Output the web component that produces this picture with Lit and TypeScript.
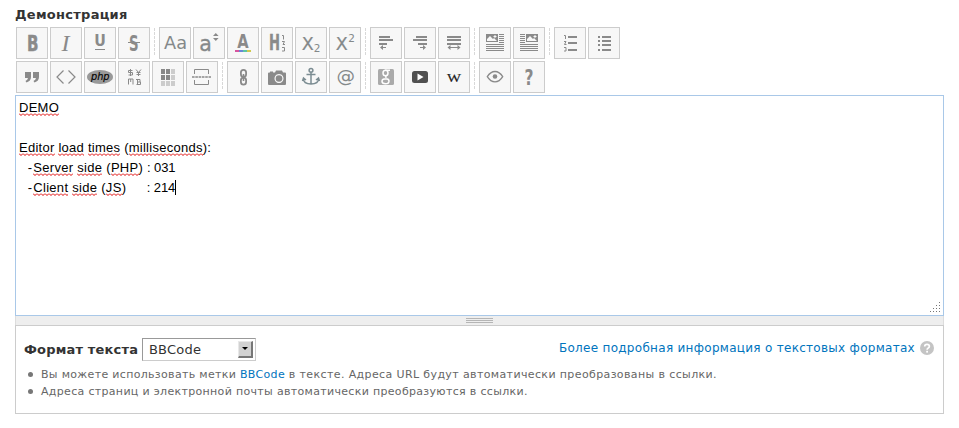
import { LitElement, html, css, svg } from "lit";
import { customElement, property } from "lit/decorators.js";

const hline = (x: number, y: number, w: number, h = 2) =>
  svg`<rect x=${x} y=${y} width=${w} height=${h} shape-rendering="crispEdges"/>`;

const picture = (x: number) => svg`
  <path fill-rule="evenodd" d="M${x} 7h12v8h-12z M${x + 1} 14v-2l3-3 3 3 1-1 3 3z M${x + 8.5} 8h1v1h1v1h-1v1h-1v-1h-1v-1h1z"/>`;

const fullLines = [17, 19, 21, 23].map((y) => hline(7, y, 18, 1));

const icons: Record<string, unknown> = {
  bold: svg`<text class="heavy" x="11" y="24" font-size="22" textLength="11.5" lengthAdjust="spacingAndGlyphs" stroke="#8a8a8a" stroke-width=".5">B</text>`,
  italic: svg`<text class="serif" x="11.6" y="24" font-size="24" font-style="italic">I</text>`,
  underline: svg`<text class="heavy" x="10.2" y="19.4" font-size="16" textLength="11.6" lengthAdjust="spacingAndGlyphs">U</text>${hline(11, 22, 10, 1)}`,
  strike: svg`<text class="heavy" x="11" y="23.5" font-size="20.5" textLength="9.6" lengthAdjust="spacingAndGlyphs">S</text>${hline(10, 15, 12, 1)}`,
  font: svg`<text class="sans" x="5" y="22" font-size="17.5" textLength="23" lengthAdjust="spacingAndGlyphs">Aa</text>`,
  size: svg`<text class="sans" x="6.3" y="24" font-size="21.5" textLength="12.6" lengthAdjust="spacingAndGlyphs" stroke="#8a8a8a" stroke-width=".3">a</text><path d="M22.8 6l2.8 3h-5.6z M22.8 14l2.8-3h-5.6z"/>`,
  color: svg`<text class="heavy" x="10.3" y="21" font-size="19" textLength="11.4" lengthAdjust="spacingAndGlyphs">A</text>
    <rect x="8" y="23" width="4" height="2" fill="#d6569f"/><rect x="12" y="23" width="4" height="2" fill="#6b84d6"/><rect x="16" y="23" width="4" height="2" fill="#5cc4a4"/><rect x="20" y="23" width="4" height="2" fill="#cfc950"/>`,
  heading: svg`<text class="heavy" x="8" y="23" font-size="21" textLength="11" lengthAdjust="spacingAndGlyphs" stroke="#8a8a8a" stroke-width=".4">H</text>
    <g fill="none" stroke="#8a8a8a" stroke-width="1"><path d="M21 8.500h1.500v4 M21 14.500h2.500l-1.500 3h2 M21 20.500h2.500v3.500h-2.500"/></g>`,
  sub: svg`<text class="sans" x="6.8" y="23" font-size="17" textLength="12" lengthAdjust="spacingAndGlyphs" stroke="#8a8a8a" stroke-width=".2">X</text><text class="sans" x="18.8" y="25.300" font-size="10.500">2</text>`,
  sup: svg`<text class="sans" x="6.8" y="23" font-size="17" textLength="12" lengthAdjust="spacingAndGlyphs" stroke="#8a8a8a" stroke-width=".2">X</text><text class="sans" x="19.2" y="14.700" font-size="10.500">2</text>`,
  left: svg`${hline(9, 9, 11)}${hline(9, 12, 14)}${hline(9, 16, 8)}<path d="M10 20.500l3-2.500v2h3v1h-3v2z"/>`,
  right: svg`${hline(12, 9, 11)}${hline(9, 12, 14)}${hline(14, 16, 9)}<path d="M22 20.500l-3-2.500v2h-3v1h3v2z"/>`,
  justify: svg`${hline(9, 9, 14)}${hline(9, 12, 14)}${hline(9, 16, 14)}<path d="M9.500 20.500l3-2.500v2h7v-2l3 2.500-3 2.500v-2h-7v2z"/>`,
  imgLeft: svg`${picture(7)}${[7, 9, 11, 13, 15].map((y) => hline(20, y, 5, 1))}${fullLines}`,
  imgRight: svg`${picture(13)}${[7, 9, 11, 13, 15].map((y) => hline(7, y, 5, 1))}${fullLines}`,
  ol: svg`${hline(14, 9, 9)}${hline(14, 15, 9)}${hline(14, 22, 9)}
    <path fill="none" stroke="#8a8a8a" d="M10 8.500h1.500v3.500 M10 14.500h2l-1.500 3h2 M10 20.500h2v3.500h-2"/>`,
  ul: svg`${[9, 13, 17, 22].map((y) => svg`${hline(10, y, 2)}${hline(14, y, 9)}`)}`,
  quote: svg`<path d="M9 11h6v5q0 4-4.500 5.500l-1-1.500q2.200-1 2.500-3h-3z M17 11h6v5q0 4-4.500 5.500l-1-1.500q2.200-1 2.500-3h-3z"/>`,
  code: svg`<path fill="none" stroke="#8a8a8a" stroke-width="1.200" d="M13.500 9.500L7 16l6.500 6.500 M18.500 9.500L25 16l-6.500 6.500"/>`,
  php: svg`<ellipse cx="16" cy="16" rx="13" ry="7" fill="#999"/><text x="7" y="19" class="plain" font-size="11" font-style="italic" stroke="#000" stroke-width=".15" textLength="18.500" lengthAdjust="spacingAndGlyphs">php</text>`,
  chars: svg`<g fill="none" stroke="#8a8a8a"><path d="M14.500 9.500h-4v2h4v2.500h-4 M12.500 8v7 M18 8.500l2.500 3 2.500-3 M20.500 11v4 M18.500 11.500h4 M18.500 13.500h4 M10.500 23.500v-5.500h4.500v5.500 M12.700 18v3 M18.500 23.500h4v-2.500h-3 M19.500 18v5.500 M18 18.500h4v2.500"/></g>`,
  grid: svg`${[0, 1, 2].map((r) => [0, 1, 2].map((c) =>
    svg`<rect x=${9 + c * 5} y=${8 + r * 6} width="4" height="5" style=${r < 2 && c < 2 ? "fill:#888" : "fill:#ccc"}/>`))}`,
  page: svg`<g fill="none" stroke="#8a8a8a"><path d="M8.500 13V8.500h14V13 M8.500 19v4.500h14V19"/><path stroke-width="1.400" stroke-dasharray="2.600 .7" d="M6 16h19"/></g>`,
  link: svg`<g fill="none" stroke="#8a8a8a" stroke-width="1.800"><rect x="13.900" y="8.900" width="5.200" height="7" rx="2.600"/><rect x="13.900" y="16.600" width="5.200" height="7" rx="2.600"/><path d="M16.500 13v7" stroke-width="1.600"/></g>`,
  camera: svg`<path fill-rule="evenodd" d="M7 12.500q0-1 1-1h1v-1h3v1h2l1-2h6l1 2h2q1 0 1 1V23q0 1-1 1H8q-1 0-1-1z M18 13a4.500 4.500 0 1 0 .01 0z"/><circle cx="18" cy="17.500" r="3.300"/>`,
  anchor: svg`<g fill="none" stroke="#7b8c92" stroke-width="1.500"><circle cx="16" cy="9.300" r="1.900"/><path d="M16 11.500V23 M11.500 13.500h9 M8.500 17.500q0 5.500 7.500 5.500t7.500-5.500 M7.500 20l1-3 2.500 2 M24.500 20l-1-3-2.500 2"/></g>`,
  at: svg`<text class="sans" x="7.600" y="20.700" font-size="18" textLength="18.500" lengthAdjust="spacingAndGlyphs">@</text>`,
  google: svg`<rect x="8" y="8" width="16" height="16" rx="1.500" style="fill:#aaa"/>
    <g fill="none" stroke="#fff" stroke-width="1.500"><ellipse cx="15.500" cy="12" rx="2.500" ry="2.800"/><path d="M15 9.200h5 M16.500 14.500q-1.500 1.200 0 2.200 M19 20q0 2.800-3.500 2.800T12 20.300q0-2.500 4-2.500 3 .2 3 2.200z"/></g>`,
  video: svg`<rect x="8" y="10" width="16" height="12" rx="2.500" style="fill:#505050"/><path d="M13.500 12.500v7l6-3.500z" style="fill:#fff"/>`,
  wiki: svg`<text class="serif" x="9" y="20.800" font-size="13.500" textLength="14" lengthAdjust="spacingAndGlyphs" stroke="#222" stroke-width=".2" style="fill:#222">W</text>`,
  eye: svg`<path fill="none" stroke="#8a8a8a" stroke-width="1.300" d="M8.300 15.700q3.200-5.200 7.700-5.200t7.700 5.200q-3.200 5.200-7.700 5.200t-7.700-5.200z"/><circle cx="16" cy="15.500" r="2.300"/>`,
  help: svg`<text class="heavy" x="11.500" y="23.500" font-size="21" textLength="9" lengthAdjust="spacingAndGlyphs">?</text>`,
};

const toolbar = [
  [["bold", "italic", "underline", "strike"], ["font", "size", "color", "heading", "sub", "sup"], ["left", "right", "justify"], ["imgLeft", "imgRight"], ["ol", "ul"]],
  [["quote", "code", "php", "chars", "grid", "page"], ["link", "camera", "anchor", "at"], ["google", "video", "wiki"], ["eye", "help"]],
];

@customElement("tool-button")
export class ToolButton extends LitElement {
  @property() icon = "";
  static styles = css`
    :host { display: block; box-sizing: border-box; width: 32px; height: 32px; border: 1px solid #ccc; background: #f7f7f7; }
    svg { display: block; fill: #8a8a8a; }
    .heavy { font-family: "DejaVu Sans", sans-serif; font-weight: bold; }
    .sans { font-family: "DejaVu Sans", sans-serif; fill: #84898a; }
    .plain { font-family: "DejaVu Sans", sans-serif; fill: #000; }
    .serif { font-family: "Liberation Serif", serif; }
  `;
  render() {
    return html`<svg width="30" height="30" viewBox="1 1 30 30">${icons[this.icon]}</svg>`;
  }
}

@customElement("app-root")
export class AppRoot extends LitElement {
  static styles = css`
    :host { display: block; box-sizing: border-box; height: 428px; padding: 7px 15px 0; background: #fff; color: #333; font: 13px/16px "DejaVu Sans", sans-serif; overflow: hidden; }
    .title { font-weight: bold; letter-spacing: .27px; height: 20px; white-space: nowrap; }
    .bar { display: flex; height: 34px; padding-left: 1px; }
    .group { display: flex; gap: 2px; }
    .group + .group { margin-left: 4px; padding-left: 4px; }
    .group + .group::before { content: ""; width: 1px; height: 28px; margin: 1px 2px 0 -4px; background: repeating-linear-gradient(#d8d8d8 0 3px, transparent 3px 4px); }
    .editor { box-sizing: border-box; height: 221px; border: 1px solid #a9c8e8; display: flex; justify-content: space-between; align-items: flex-end; }
    .text { align-self: flex-start; margin: 0; padding: 2px 3px; color: #000; font: 13px/20px "Liberation Sans", Arial, sans-serif; letter-spacing: .26px; white-space: pre; }
    .bad { padding-bottom: 1px; background: url("data:image/svg+xml,%3Csvg xmlns='http://www.w3.org/2000/svg' width='4' height='3'%3E%3Cpath d='M0 .5L2 2.500L4 .5' fill='none' stroke='%23dd0000' stroke-width='1'/%3E%3C/svg%3E") repeat-x left bottom; }
    .item { padding-left: 1px; letter-spacing: .3px; }
    .dash { margin-right: .8px; }
    .wide { letter-spacing: .5px; }
    .num { letter-spacing: -.1px; }
    .caret { display: inline-block; width: 1px; height: 15px; background: #000; vertical-align: -3px; }
    .resize { display: block; margin: 0 3px 2px 0; fill: #777; }
    .grip { box-sizing: border-box; height: 9px; border: 1px solid #ddd; border-top: 0; border-bottom: 0; background: #eee; display: flex; flex-direction: column; gap: 1px; align-items: center; padding-top: 2px; }
    .grip i { width: 27px; height: 1px; background: #b5b5b5; }
    .panel { box-sizing: border-box; height: 89px; border: 1px solid #ccc; padding: 12px 9px 0 8px; }
    .row { display: flex; align-items: center; height: 23px; }
    .label { font-weight: bold; width: 118px; letter-spacing: .18px; white-space: nowrap; }
    .select { box-sizing: border-box; width: 114px; height: 23px; border: 1px solid #999; border-right-color: #ccc; border-bottom-color: #ccc; display: flex; align-items: center; justify-content: space-between; padding: 0 2px 0 6px; letter-spacing: .2px; }
    .arrow { box-sizing: border-box; width: 15px; height: 17px; background: #d2d2d2; border: 1px solid #e8e8e8; border-right: 2px solid #777; border-bottom: 2px solid #777; display: flex; justify-content: center; padding-top: 5px; }
    .more { margin-left: auto; display: flex; align-items: center; gap: 5px; color: #0074bd; font-size: 12px; letter-spacing: .29px; height: 20px; white-space: nowrap; margin-top: -4px; }
    ul { margin: 5px 0 0; padding: 0; list-style: none; font-size: 11px; line-height: 17px; letter-spacing: .32px; color: #666; }
    li { display: flex; align-items: center; white-space: pre; height: 17px; }
    .tail { letter-spacing: .38px; }
    li::before { content: ""; width: 5px; height: 5px; border-radius: 50%; background: #777; margin: 0 8px 0 4px; }
    a { color: #0074bd; }
  `;
  render() {
    const bad = (t: string) => html`<span class="bad">${t}</span>`;
    return html`
      <div class="title">Демонстрация</div>
      ${toolbar.map((row) => html`<div class="bar">${row.map((g) => html`<div class="group">${g.map((i) => html`<tool-button icon=${i}></tool-button>`)}</div>`)}</div>`)}
      <div class="editor">
        <div class="text">${bad("DEMO")}<br><br>${bad("Editor")} ${bad("load")} ${bad("times")} (${bad("milliseconds")}):<br><span class="item">  <span class="dash">-</span>${bad("Server")} ${bad("side")} (${bad("PHP")}) <span class="num">: 031</span></span><br><span class="item">  <span class="dash">-</span>${bad("Client")} ${bad("side")} (${bad("JS")})<span class="wide">     </span><span class="num">: 214</span></span><span class="caret"></span></div>
        <svg class="resize" width="11" height="11">${[0, 1, 2, 3].map((r) => Array.from({ length: r + 1 }, (_, c) => svg`<rect x=${10 - c * 3} y=${r * 3} width="1" height="1"/>`))}</svg>
      </div>
      <div class="grip"><i></i><i></i><i></i></div>
      <div class="panel">
        <div class="row">
          <span class="label">Формат текста</span>
          <div class="select"><span>BBCode</span><span class="arrow"><svg width="6" height="3"><path d="M0 0h6l-3 3z"/></svg></span></div>
          <a class="more">Более подробная информация о текстовых форматах
            <svg width="14" height="14"><circle cx="7" cy="7" r="7" fill="#c4c4c4"/><path d="M4.700 5.500Q4.700 3.300 7 3.300T9.400 5.300Q9.400 6.500 8 7.200 7.100 7.700 7.100 8.700" fill="none" stroke="#fff" stroke-width="1.700"/><rect x="6.200" y="9.800" width="1.800" height="1.800" fill="#fff"/></svg>
          </a>
        </div>
        <ul>
          <li>Вы можете использовать метки <a>BBCode</a><span class="tail"> в тексте. Адреса URL будут автоматически преобразованы в ссылки.</span></li>
          <li>Адреса страниц и электронной почты автоматически преобразуются в ссылки.</li>
        </ul>
      </div>`;
  }
}
